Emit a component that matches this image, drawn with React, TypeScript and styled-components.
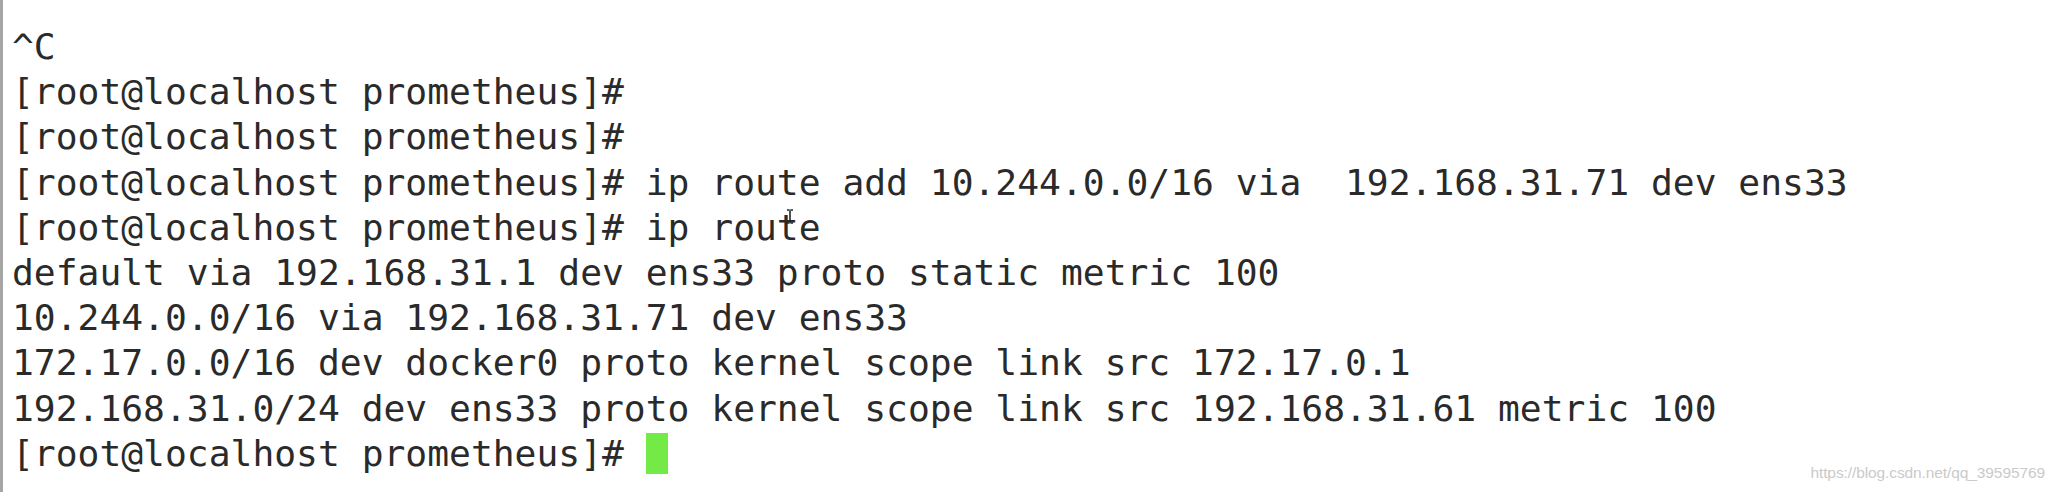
import React from "react";
import styled, { createGlobalStyle } from "styled-components";

const Global = createGlobalStyle`
  html, body {
    margin: 0;
    padding: 0;
    background: #ffffff;
  }
  #root {
    width: 2054px;
    height: 492px;
  }
`;

const Screen = styled.div`
  position: relative;
  box-sizing: border-box;
  width: 2054px;
  height: 492px;
  overflow: hidden;
  background: #ffffff;
  border-left: 3px solid #a6a6a6;
`;

const Terminal = styled.pre`
  margin: 0;
  padding: 24px 0 0 9px;
  font-family: "DejaVu Sans Mono", monospace;
  font-size: 36.3px;
  line-height: 45.2px;
  color: #2a2a2a;
  white-space: pre;
`;

const Line = styled.div`
  height: 45.2px;
`;

const Block = styled.span`
  display: inline-block;
  width: 22px;
  height: 41px;
  vertical-align: -8px;
  background: #74ea46;
`;

const Hover = styled.span`
  position: relative;
`;

const IBeam = styled.svg`
  position: absolute;
  left: 9px;
  top: 3px;
  width: 8px;
  height: 15px;
`;

const Watermark = styled.div`
  position: absolute;
  right: 9px;
  bottom: 12px;
  font-family: "Liberation Sans", Arial, sans-serif;
  font-size: 15.5px;
  line-height: 1;
  color: #cacaca;
  letter-spacing: -0.1px;
`;

const PROMPT = "[root@localhost prometheus]#";

export default function App() {
  return (
    <>
      <Global />
      <Screen>
        <Terminal>
          <Line>^C</Line>
          <Line>{PROMPT}</Line>
          <Line>{PROMPT}</Line>
          <Line>{PROMPT + " ip route add 10.244.0.0/16 via  192.168.31.71 dev ens33"}</Line>
          <Line>
            {PROMPT + " ip rou"}
            <Hover>
              t
              <IBeam viewBox="0 0 8 15" aria-hidden="true">
                <path
                  d="M1 1h2.6M4.4 1H7M4 1.5v12M1 14h2.6M4.4 14H7"
                  stroke="#262626"
                  strokeWidth="1.6"
                  fill="none"
                />
              </IBeam>
            </Hover>
            e
          </Line>
          <Line>default via 192.168.31.1 dev ens33 proto static metric 100</Line>
          <Line>10.244.0.0/16 via 192.168.31.71 dev ens33</Line>
          <Line>172.17.0.0/16 dev docker0 proto kernel scope link src 172.17.0.1</Line>
          <Line>192.168.31.0/24 dev ens33 proto kernel scope link src 192.168.31.61 metric 100</Line>
          <Line>
            {PROMPT + " "}
            <Block />
          </Line>
        </Terminal>
        <Watermark>https://blog.csdn.net/qq_39595769</Watermark>
      </Screen>
    </>
  );
}
